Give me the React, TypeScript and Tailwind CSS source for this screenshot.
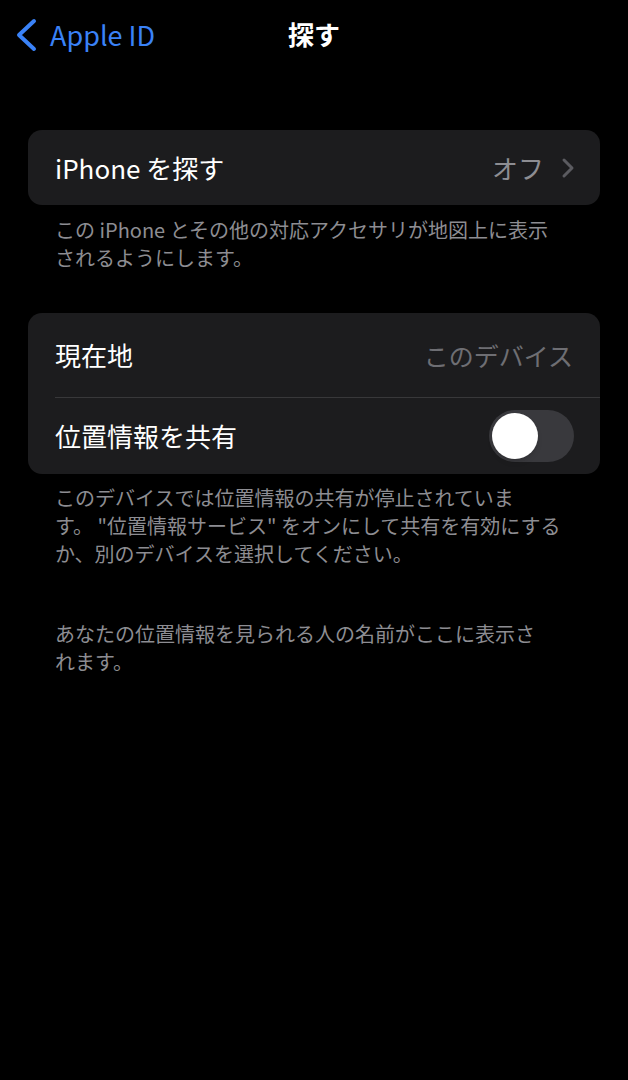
import { ChevronRight } from 'lucide-react'

const font = { fontFamily: '"Noto Sans CJK JP", "Noto Sans", sans-serif' }

function Toggle({ on }: { on: boolean }) {
  return (
    <div className={`flex items-center w-[85px] h-[52px] rounded-full p-[3px] ${on ? 'bg-[#30d158] justify-end' : 'bg-[#39393d] justify-start'}`}>
      <div className="w-[46px] h-[46px] rounded-full bg-white shadow-md" />
    </div>
  )
}

export default function App() {
  return (
    <div className="min-h-[1080px] w-[628px] bg-black text-white" style={font}>
      {/* ナビゲーション */}
      <div className="relative h-[70px] flex items-center">
        <div className="flex items-center pl-[13px] text-[#3a82f7]">
          <svg width="26" height="36" viewBox="0 0 26 36" fill="none">
            <polyline points="21,4 6,18 21,32" stroke="currentColor" strokeWidth="4" strokeLinecap="round" strokeLinejoin="round" />
          </svg>
          <span className="text-[27px] leading-none pl-[11px] -mt-[2px]">Apple ID</span>
        </div>
        <div className="absolute left-0 right-0 top-0 h-[70px] flex items-center justify-center pointer-events-none">
          <span className="text-[26px] font-bold leading-none -mt-[2px]">探す</span>
        </div>
      </div>

      <div className="px-[28px] pt-[60px]">
        {/* iPhoneを探す */}
        <div className="bg-[#1c1c1e] rounded-[14px] h-[75px] flex items-center justify-between pl-[27px] pr-[24px]">
          <span className="text-[26px] leading-none">iPhone を探す</span>
          <div className="flex items-center gap-[16px] text-[#8d8d92]">
            <span className="text-[26px] leading-none">オフ</span>
            <svg width="16" height="24" viewBox="0 0 16 24" fill="none" className="text-[#5b5b60]">
              <polyline points="4,4 12,12 4,20" stroke="currentColor" strokeWidth="3" strokeLinecap="round" strokeLinejoin="round" />
            </svg>
          </div>
        </div>
        <p className="px-[27px] pt-[11px] text-[20px] leading-[28px] text-[#8d8d92] whitespace-nowrap">
          この iPhone とその他の対応アクセサリが地図上に表示<br />されるようにします。
        </p>

        {/* 現在地 */}
        <div className="mt-[41px] bg-[#1c1c1e] rounded-[14px] overflow-hidden">
          <div className="h-[84px] flex items-center justify-between pl-[27px] pr-[27px]">
            <span className="text-[26px] leading-none">現在地</span>
            <span className="text-[25px] leading-none text-[#6e6e73]">このデバイス</span>
          </div>
          <div className="ml-[27px] h-px bg-[#38383a]" />
          <div className="h-[76px] flex items-center justify-between pl-[27px] pr-[26px]">
            <span className="text-[26px] leading-none">位置情報を共有</span>
            <Toggle on={false} />
          </div>
        </div>
        <p className="px-[27px] pt-[10px] text-[20px] leading-[28px] text-[#8d8d92] whitespace-nowrap">
          このデバイスでは位置情報の共有が停止されていま<br />
          す。 "位置情報サービス" をオンにして共有を有効にする<br />
          か、別のデバイスを選択してください。
        </p>

        <p className="px-[27px] pt-[52px] text-[20px] leading-[28px] text-[#8d8d92] whitespace-nowrap">
          あなたの位置情報を見られる人の名前がここに表示さ<br />れます。
        </p>
      </div>
    </div>
  )
}
